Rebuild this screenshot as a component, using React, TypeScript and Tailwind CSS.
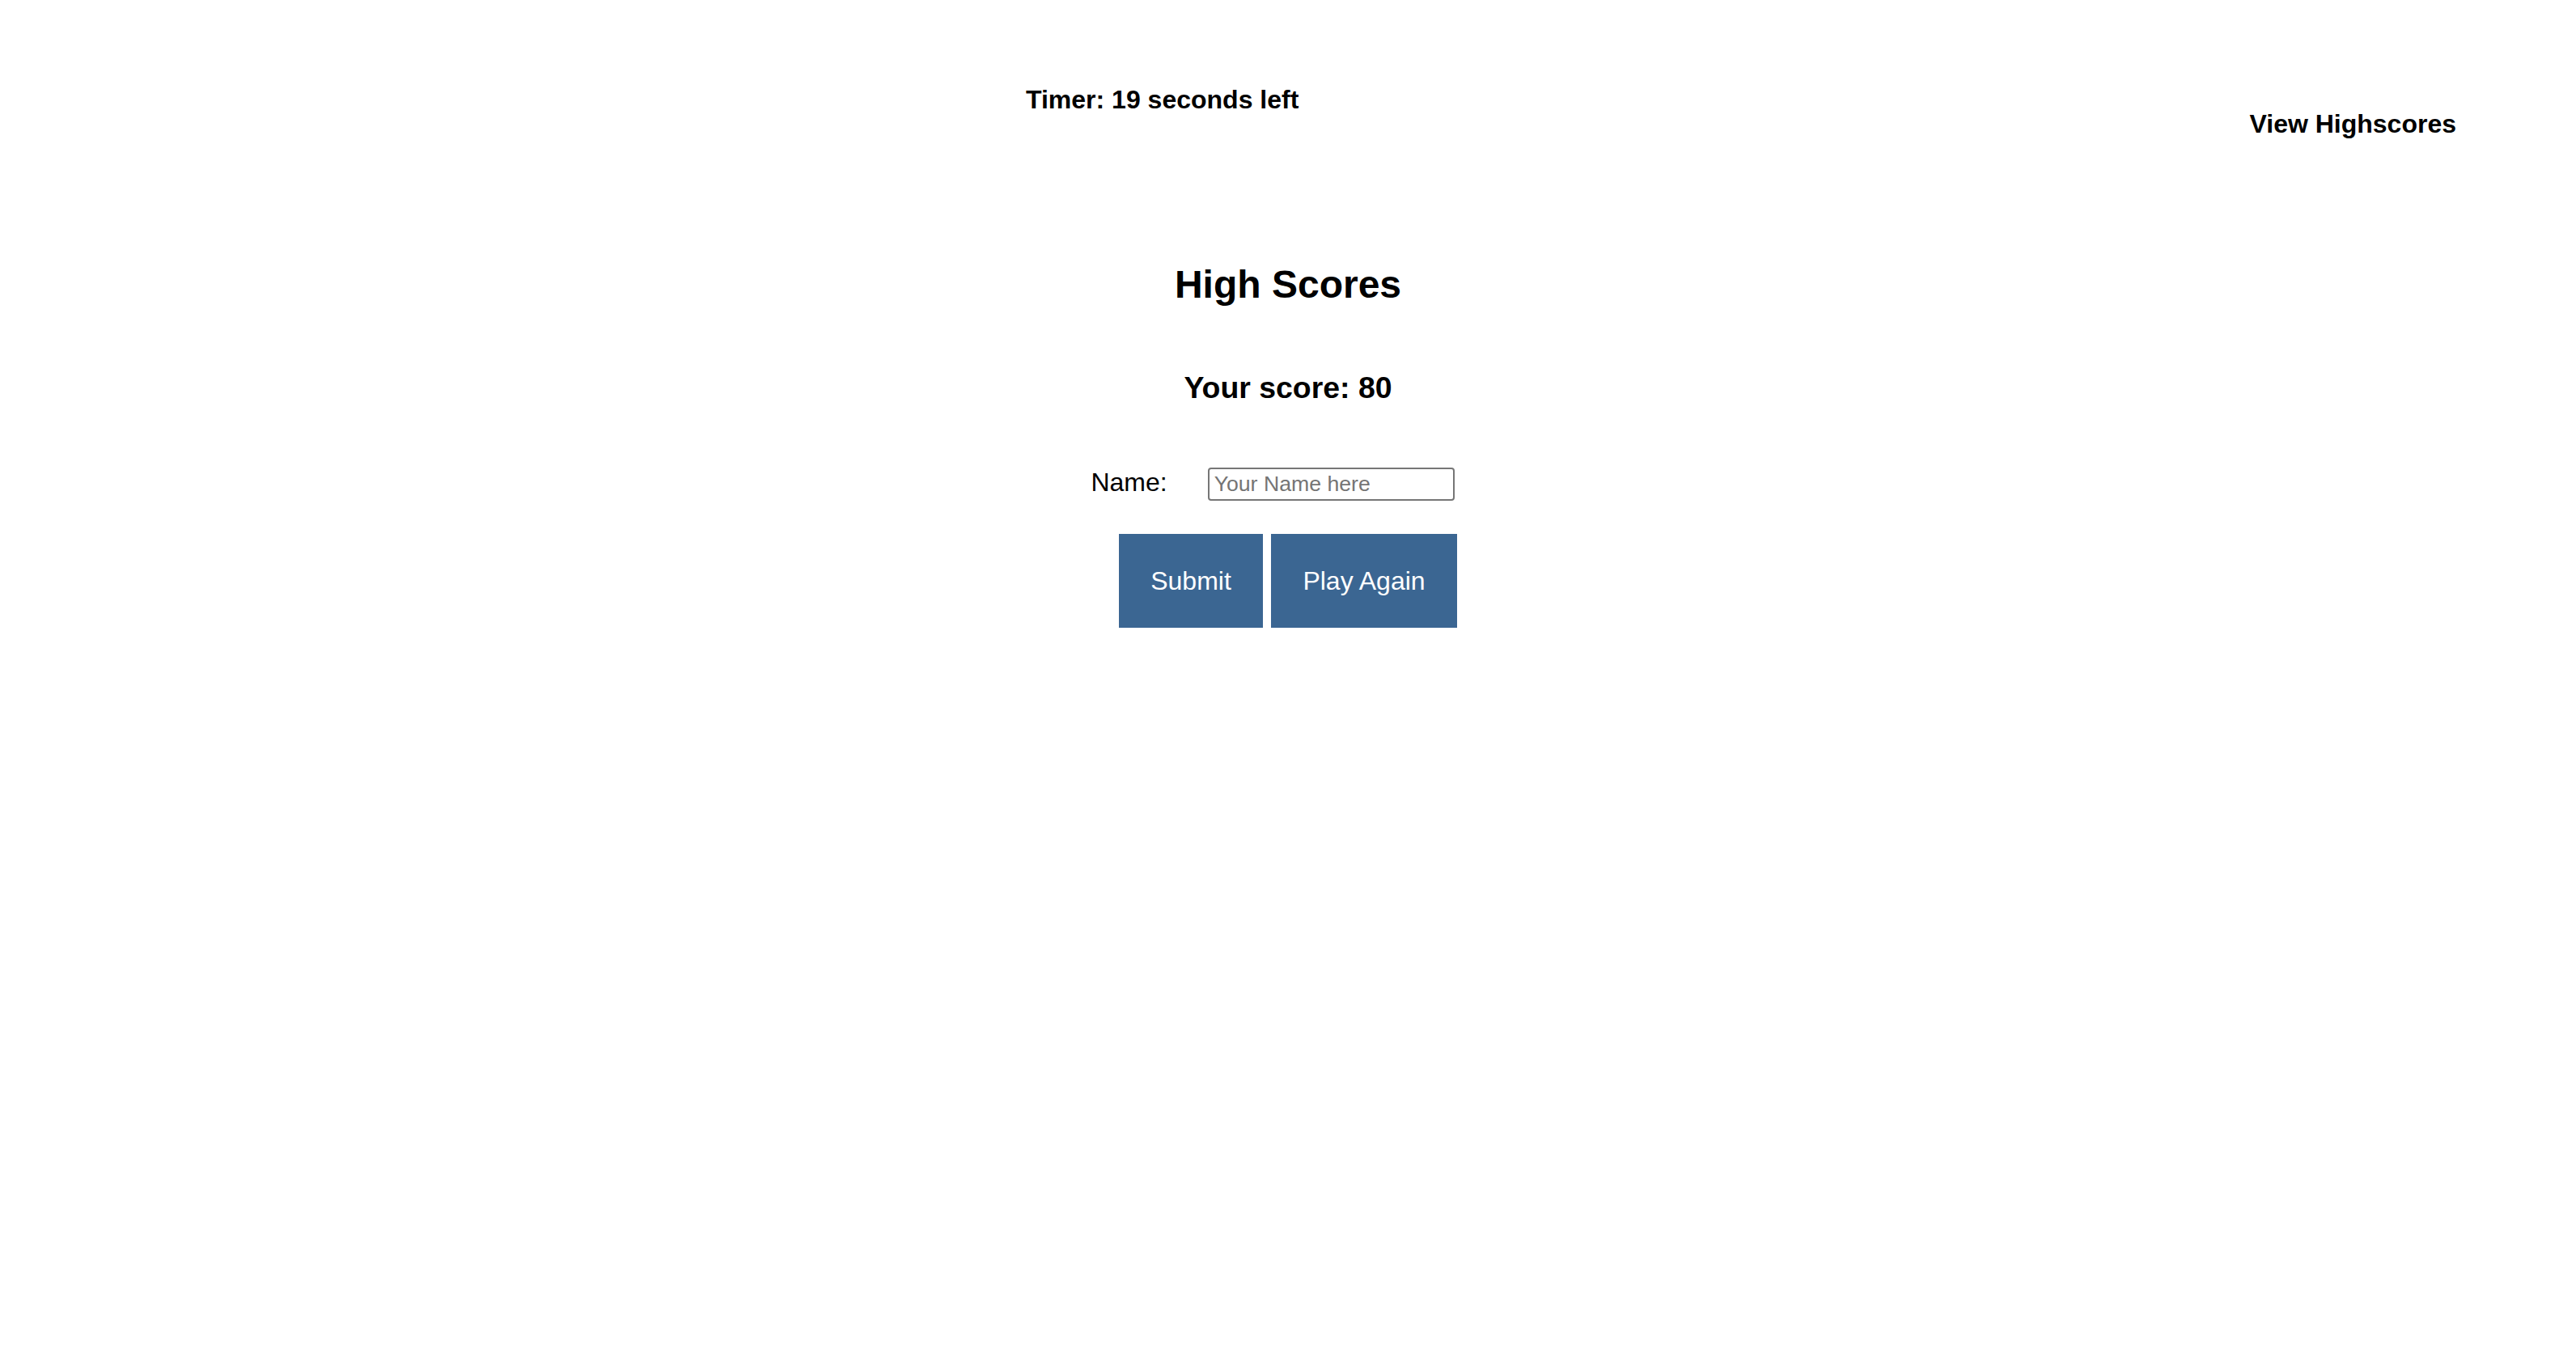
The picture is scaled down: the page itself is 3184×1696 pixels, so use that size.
export default function App() {
  return (
    <div className="min-h-[1696px] w-full bg-white text-black font-['Liberation_Sans',Arial,sans-serif]">
      {/* Header */}
      <header className="flex items-start justify-between pl-[1268px] pr-[148px]">
        <p className="mt-[105px] text-[32px] leading-[1.15] font-bold">Timer: 19 seconds left</p>
        <a href="#" className="mt-[135px] text-[32px] leading-[1.15] font-bold">View Highscores</a>
      </header>

      {/* High scores panel */}
      <main className="flex flex-col items-center">
        <h2 className="mt-[152px] text-[48px] leading-[1.15] font-bold">High Scores</h2>
        <h3 className="mt-[79px] text-[37.44px] leading-[1.15] font-bold">Your score: 80</h3>

        <div className="mt-[77px] flex items-start">
          <label htmlFor="name" className="text-[32px] leading-[1.15] pl-[2px]">Name:</label>
          <input
            id="name"
            type="text"
            placeholder="Your Name here"
            className="ml-[50px] mr-[40px] h-[41px] w-[305px] rounded-[4px] border-2 border-[#767676] px-[6px] text-[26.67px] leading-none placeholder:text-[#757575] outline-none"
          />
        </div>

        <div className="mt-[41px] flex gap-[10px]">
          <button className="h-[116px] w-[178px] bg-[#3b6692] text-[32px] text-white">Submit</button>
          <button className="h-[116px] w-[230px] bg-[#3b6692] text-[32px] text-white">Play Again</button>
        </div>
      </main>
    </div>
  );
}
